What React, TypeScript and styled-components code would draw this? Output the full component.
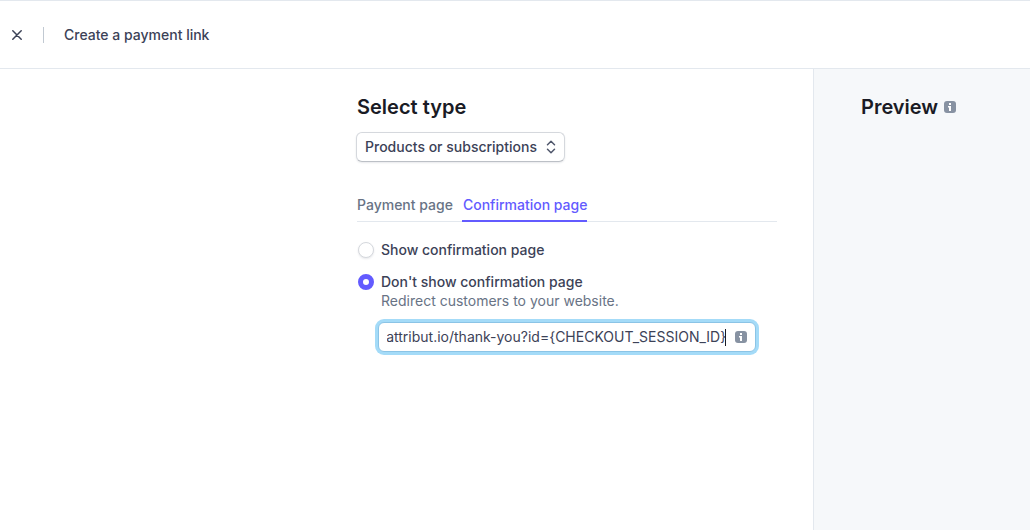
import React, { useLayoutEffect, useRef, useState } from 'react';
import styled, { createGlobalStyle } from 'styled-components';

const GlobalStyle = createGlobalStyle`
  *, *::before, *::after { box-sizing: border-box; }
  body {
    margin: 0;
    background: #fff;
    color: #3c4257;
    font-family: Inter, "Liberation Sans", sans-serif;
    font-size: 14px;
    line-height: 20px;
  }
  button, input, select { font: inherit; color: inherit; margin: 0; }
`;

const Page = styled.div`
  min-height: 100vh;
  display: flex;
  flex-direction: column;
`;

const Header = styled.header`
  display: flex;
  align-items: center;
  height: 69px;
  padding: 0 8px;
  border-top: 1px solid #e3e8ee;
  border-bottom: 1px solid #e3e8ee;
`;

const CloseButton = styled.button`
  display: grid;
  place-items: center;
  width: 18px;
  height: 18px;
  padding: 0;
  border: 0;
  background: none;
`;

const Divider = styled.span`
  width: 1px;
  height: 16px;
  margin: 0 20px 0 17px;
  background: #c1c9d2;
`;

const HeaderTitle = styled.span`
  font-weight: 500;
`;

const Body = styled.div`
  flex: 1;
  display: grid;
  grid-template-columns: minmax(0, 1fr) 217px;
`;

const Main = styled.main`
  display: flex;
  justify-content: flex-end;
  padding: 24px 36px;
`;

const Content = styled.div`
  width: 100%;
  max-width: 420px;
`;

const Sidebar = styled.aside`
  padding: 24px 47px;
  border-left: 1px solid #e3e8ee;
  background: #f6f8fa;
`;

const Heading = styled.h2`
  display: flex;
  align-items: center;
  gap: 6px;
  margin: 0;
  color: #1a1b25;
  font-size: 20px;
  line-height: 28px;
  font-weight: 600;
`;

const SelectBox = styled.div`
  position: relative;
  width: 209px;
  margin: 11px 0 0 -1px;
`;

const Select = styled.select`
  appearance: none;
  display: block;
  width: 100%;
  height: 30px;
  padding: 0 24px 0 8px;
  border: 1px solid #d5d8dd;
  border-bottom-color: #bcc0c6;
  border-radius: 6px;
  background: #fff;
  box-shadow: 0 1px 2px rgba(60, 66, 87, 0.12);
  font-weight: 500;
`;

const SelectArrows = styled.svg`
  position: absolute;
  top: 8px;
  right: 8px;
  pointer-events: none;
`;

const Tabs = styled.div`
  display: flex;
  gap: 9px;
  margin-top: 33px;
  border-bottom: 1px solid #e3e8ee;
`;

const Tab = styled.button<{ $active: boolean }>`
  height: 27px;
  margin-bottom: -1px;
  padding: 0 0 5px 1px;
  border: 0;
  border-bottom: 2px solid ${(p) => (p.$active ? '#635bff' : 'transparent')};
  background: none;
  color: ${(p) => (p.$active ? '#635bff' : '#687385')};
  font-weight: 500;
  white-space: nowrap;
  &:first-child { padding-left: 0; }
`;

const Options = styled.div`
  display: flex;
  flex-direction: column;
  gap: 12px;
  margin-top: 18px;
  padding-left: 1px;
`;

const Option = styled.label`
  display: flex;
  align-items: center;
  gap: 7px;
  font-weight: 500;
`;

const Radio = styled.input`
  appearance: none;
  width: 16px;
  height: 16px;
  border: 1px solid #d5d8dd;
  border-radius: 50%;
  background: #fff;
  box-shadow: 0 1px 2px rgba(60, 66, 87, 0.12);
  &:checked {
    border: 5px solid #635bff;
    box-shadow: none;
  }
`;

const Hint = styled.p`
  margin: 0 0 0 23px;
  line-height: 18px;
  color: #687385;
`;

const UrlField = styled.div`
  display: flex;
  align-items: center;
  height: 30px;
  margin: 12px 21px 0 20px;
  padding: 0 8px;
  border: 1px solid #8bc4e6;
  border-radius: 6px;
  background: #fff;
  box-shadow: 0 0 0 3px #a4dbf8;
`;

const UrlInput = styled.input`
  flex: 1;
  min-width: 0;
  height: 20px;
  padding: 0;
  border: 0;
  outline: 0;
  background: none;
  caret-color: transparent;
`;

const Caret = styled.span`
  width: 1px;
  height: 17px;
  margin: 0 9px 0 -1px;
  background: #1a1b25;
`;

function InfoIcon() {
  return (
    <svg width="12" height="12" viewBox="0 0 12 12" aria-hidden="true">
      <rect width="12" height="12" rx="3" fill="#8792a2" />
      <path d="M5 2h2v2H5zM4 5h3v5H5V6.5H4z" fill="#fff" />
    </svg>
  );
}

export default function App() {
  const [tab, setTab] = useState('Confirmation page');
  const [mode, setMode] = useState('redirect');
  const [url, setUrl] = useState('https://attribut.io/thank-you?id={CHECKOUT_SESSION_ID}');
  const urlRef = useRef<HTMLInputElement>(null);

  useLayoutEffect(() => {
    const field = urlRef.current;
    if (!field) return;
    const showEnd = () => {
      field.focus();
      field.setSelectionRange(field.value.length, field.value.length);
      field.scrollLeft = field.scrollWidth;
    };
    showEnd();
    document.fonts.ready.then(showEnd);
  }, []);

  return (
    <Page>
      <GlobalStyle />
      <Header>
        <CloseButton type="button" aria-label="Close">
          <svg width="10" height="10" viewBox="0 0 10 10" fill="none" stroke="#3c4257" strokeWidth="1.5" strokeLinecap="round">
            <path d="M.8.8l8.4 8.4M9.2.8L.8 9.2" />
          </svg>
        </CloseButton>
        <Divider />
        <HeaderTitle>Create a payment link</HeaderTitle>
      </Header>
      <Body>
        <Main>
          <Content>
            <Heading as="label" htmlFor="link-type">Select type</Heading>
            <SelectBox>
              <Select id="link-type">
                <option>Products or subscriptions</option>
              </Select>
              <SelectArrows width="12" height="14" viewBox="0 0 12 14" fill="none" stroke="#4f566b" strokeWidth="1.5" strokeLinecap="round" strokeLinejoin="round">
                <path d="M2.5 4.7L6 1.3l3.5 3.4M2.5 9.3L6 12.7l3.5-3.4" />
              </SelectArrows>
            </SelectBox>
            <Tabs role="tablist">
              {['Payment page', 'Confirmation page'].map((name) => (
                <Tab key={name} type="button" role="tab" aria-selected={tab === name} $active={tab === name} onClick={() => setTab(name)}>
                  {name}
                </Tab>
              ))}
            </Tabs>
            <Options role="radiogroup" aria-label="After payment">
              <Option>
                <Radio type="radio" name="mode" checked={mode === 'show'} onChange={() => setMode('show')} />
                Show confirmation page
              </Option>
              <div>
                <Option>
                  <Radio type="radio" name="mode" checked={mode === 'redirect'} onChange={() => setMode('redirect')} />
                  Don't show confirmation page
                </Option>
                <Hint>Redirect customers to your website.</Hint>
                <UrlField>
                  <UrlInput ref={urlRef} type="text" aria-label="Redirect URL" value={url} onChange={(e) => setUrl(e.target.value)} />
                  <Caret />
                  <InfoIcon />
                </UrlField>
              </div>
            </Options>
          </Content>
        </Main>
        <Sidebar>
          <Heading>
            Preview
            <InfoIcon />
          </Heading>
        </Sidebar>
      </Body>
    </Page>
  );
}
